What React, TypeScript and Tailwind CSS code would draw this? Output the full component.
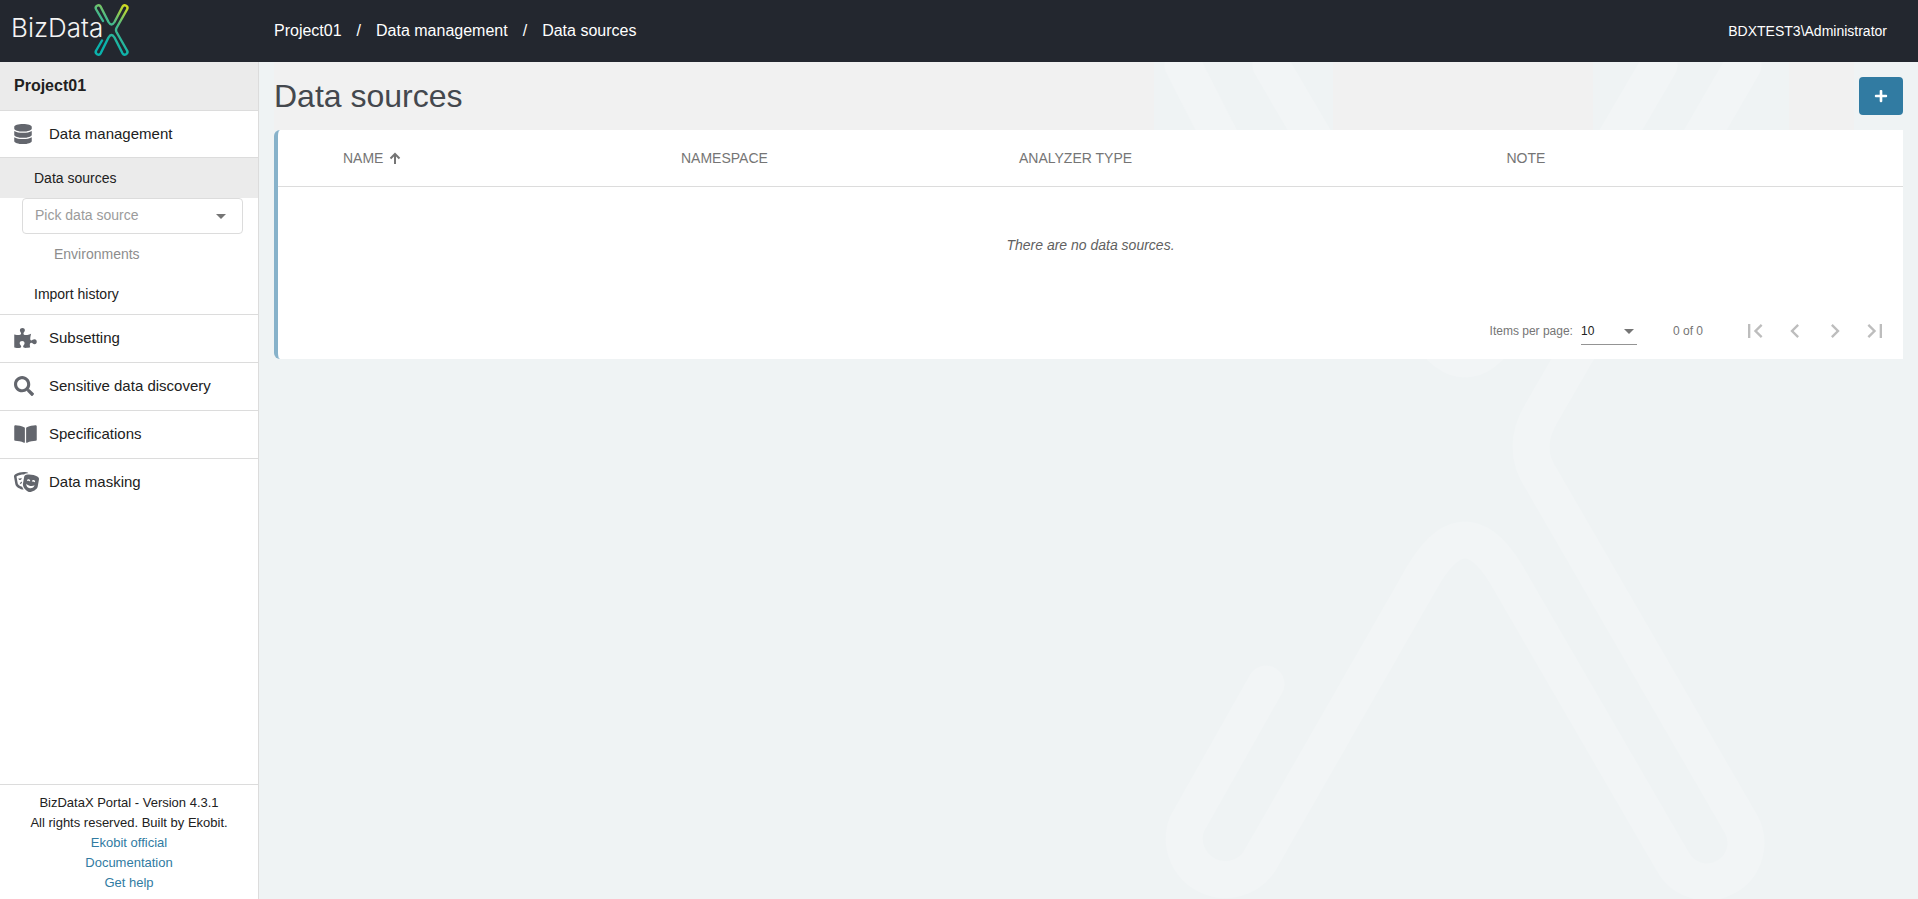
import type { ReactNode } from "react";
import { FaBookOpen, FaDatabase, FaPlus, FaPuzzlePiece, FaSearch, FaTheaterMasks } from "react-icons/fa";
import { MdArrowDropDown, MdChevronLeft, MdChevronRight, MdFirstPage, MdLastPage } from "react-icons/md";

const breadcrumbs = ["Project01", "Data management", "Data sources"];

const footerLinks = ["Ekobit official", "Documentation", "Get help"];

const sections = [
  { label: "Subsetting", icon: <FaPuzzlePiece className="h-5 w-[23px]" /> },
  { label: "Sensitive data discovery", icon: <FaSearch className="size-5" /> },
  { label: "Specifications", icon: <FaBookOpen className="h-5 w-[23px]" /> },
  { label: "Data masking", icon: <FaTheaterMasks className="h-5 w-[25px]" /> },
];

function Logo() {
  return (
    <svg width="130" height="62" viewBox="0 0 130 62" role="img" aria-label="BizDataX">
      <defs>
        <linearGradient id="logo-x" gradientUnits="userSpaceOnUse" x1="127" y1="6" x2="103" y2="42">
          <stop offset="0" stopColor="#d3dc1f" />
          <stop offset="0.5" stopColor="#48b98a" />
          <stop offset="1" stopColor="#0ab2ac" />
        </linearGradient>
      </defs>
      <text x="11" y="37" fill="#f4f4f4" fontFamily="Inter, sans-serif" fontWeight="300" fontSize="26">
        BizData
      </text>
      <g fill="none" stroke="url(#logo-x)" strokeWidth="2.4" strokeLinecap="round" strokeLinejoin="round">
        <path d="M103 21 96.200 9.500a2.600 2.600 0 0 1 4.500-2.800L108.500 22q3 5 6 0L122.500 6.700a2.600 2.600 0 0 1 4.500 2.800L116.500 28q-1 2 0 4L127 50.500a2.600 2.600 0 0 1-4.500 2.800L114.500 37.500q-3-5-6 0L100.700 53.300a2.600 2.600 0 0 1-4.500-2.800L102 40.500" />
      </g>
    </svg>
  );
}

function SortArrow() {
  return (
    <svg className="size-3" viewBox="0 0 12 12" fill="none" stroke="currentColor" strokeWidth="2" aria-hidden="true">
      <path d="M6 12V2M1.500 6.500 6 2l4.500 4.500" />
    </svg>
  );
}

function Watermark() {
  return (
    <svg
      className="pointer-events-none absolute right-0 top-0 h-[837px] w-[800px]"
      viewBox="1118 62 800 837"
      fill="none"
      stroke="#f2f5f6"
      strokeWidth="37"
      strokeLinecap="round"
      strokeLinejoin="round"
      aria-hidden="true"
    >
      <path d="M1743 65 1542 412Q1520 448 1542 480L1741 824A38 38 0 0 1 1673 862L1506 574Q1465 506 1424 574L1259 862A41 41 0 0 1 1187 824L1266 684" />
      <path d="M1659 65 1506 326Q1465 392 1424 326L1271 65" />
      <path d="M1183 65 1230 157" />
    </svg>
  );
}

interface SectionButtonProps {
  icon: ReactNode;
  label: string;
}

function SectionButton({ icon, label }: SectionButtonProps) {
  return (
    <button type="button" className="flex h-[46px] w-full items-center px-3.5 text-left text-[15px]">
      <span className="flex w-[35px] shrink-0 text-[#63666d]">{icon}</span>
      {label}
    </button>
  );
}

function Sidebar() {
  return (
    <aside className="flex w-[259px] shrink-0 flex-col border-r border-[#dcdcdc] bg-white">
      <h2 className="h-[49px] border-b border-[#dcdcdc] bg-[#ebebeb] px-3.5 text-base leading-[47px] font-bold">
        Project01
      </h2>
      <nav>
        <SectionButton icon={<FaDatabase className="h-5 w-[18px]" />} label="Data management" />
        <div className="border-b border-[#dcdcdc]">
          <a
            href="#data-sources"
            className="block h-[41px] border-t border-[#dcdcdc] bg-[#ebebeb] pl-[34px] text-sm leading-10"
          >
            Data sources
          </a>
          <div className="relative mr-[15px] ml-[22px]">
            <select
              aria-label="Pick data source"
              className="h-9 w-full appearance-none rounded border border-[#dcdcdc] bg-white px-3 pb-0.5 text-sm text-[#9b9b9b]"
            >
              <option>Pick data source</option>
            </select>
            <MdArrowDropDown className="pointer-events-none absolute top-1.5 right-2.5 size-6 text-[#757575]" />
          </div>
          <a href="#environments" className="block h-10 pl-[54px] text-sm leading-10 text-[#8d8d8d]">
            Environments
          </a>
          <a href="#import-history" className="block h-10 pl-[34px] text-sm leading-10">
            Import history
          </a>
        </div>
        <ul className="divide-y divide-[#dcdcdc]">
          {sections.map((section) => (
            <li key={section.label} className="pb-px">
              <SectionButton icon={section.icon} label={section.label} />
            </li>
          ))}
        </ul>
      </nav>
      <footer className="mt-auto border-t border-[#dcdcdc] px-2 pt-2 pb-1.5 text-center text-[13px] leading-5">
        <p>BizDataX Portal - Version 4.3.1</p>
        <p>All rights reserved. Built by Ekobit.</p>
        {footerLinks.map((link) => (
          <a key={link} href="#" className="block text-[#317ba2]">
            {link}
          </a>
        ))}
      </footer>
    </aside>
  );
}

function Paginator() {
  return (
    <div className="flex h-14 items-center justify-end pr-2 text-xs text-[#757575]">
      <label htmlFor="page-size">Items per page:</label>
      <div className="relative ml-2 w-14">
        <select
          id="page-size"
          className="h-7 w-full appearance-none border-b border-[#949494] bg-transparent text-[#212121]"
        >
          <option>10</option>
        </select>
        <MdArrowDropDown className="pointer-events-none absolute top-0.5 -right-1 size-6" />
      </div>
      <span className="mr-8 ml-9">0 of 0</span>
      <div className="flex text-[#bdbdbd]">
        <button type="button" aria-label="First page" className="flex size-10 items-center justify-center">
          <MdFirstPage className="size-7" />
        </button>
        <button type="button" aria-label="Previous page" className="flex size-10 items-center justify-center">
          <MdChevronLeft className="size-7" />
        </button>
        <button type="button" aria-label="Next page" className="flex size-10 items-center justify-center">
          <MdChevronRight className="size-7" />
        </button>
        <button type="button" aria-label="Last page" className="flex size-10 items-center justify-center">
          <MdLastPage className="size-7" />
        </button>
      </div>
    </div>
  );
}

function DataSourcesTable() {
  return (
    <section className="relative rounded-l-md border-l-4 border-[#87b2ca] bg-white">
      <table className="w-full table-fixed text-left">
        <thead>
          <tr className="h-14 border-b border-[#dcdcdc] text-sm text-[#757575]">
            <th className="w-[4%]" />
            <th className="w-[20.8%] font-normal">
              <button type="button" className="flex items-center gap-1.5">
                NAME <SortArrow />
              </button>
            </th>
            <th className="w-[20.8%] font-normal">NAMESPACE</th>
            <th className="w-[30%] font-normal">ANALYZER TYPE</th>
            <th className="font-normal">NOTE</th>
          </tr>
        </thead>
        <tbody>
          <tr className="h-[117px] text-center text-sm text-[#616161] italic">
            <td colSpan={5}>There are no data sources.</td>
          </tr>
        </tbody>
      </table>
      <Paginator />
    </section>
  );
}

export default function App() {
  return (
    <div className="flex min-h-screen flex-col bg-[#eff3f4] font-['Liberation_Sans',Arial,sans-serif] text-[#212121]">
      <header className="flex h-[62px] shrink-0 items-center bg-[#23272f] text-white">
        <div className="w-[274px] shrink-0">
          <Logo />
        </div>
        <nav aria-label="Breadcrumb" className="flex text-base">
          {breadcrumbs.map((crumb, index) => (
            <span key={crumb}>
              {index > 0 ? <span className="mx-[15px]">/</span> : null}
              <a href="#">{crumb}</a>
            </span>
          ))}
        </nav>
        <span className="ml-auto pr-[31px] text-sm">BDXTEST3\Administrator</span>
      </header>
      <div className="flex flex-1">
        <Sidebar />
        <main className="relative flex-1 overflow-hidden px-[15px]">
          <Watermark />
          <div className="relative flex h-[68px] items-center justify-between bg-[linear-gradient(90deg,#f1f1f1_54%,transparent_54%,transparent_65%,#f1f1f1_65%,#f1f1f1_81%,transparent_81%,transparent_93%,#f1f1f1_93%,#f1f1f1_97%,transparent_97%)]">
            <h1 className="text-[32px] text-[#44484e]">Data sources</h1>
            <button
              type="button"
              aria-label="Add data source"
              className="flex h-[38px] w-11 items-center justify-center rounded bg-[#317ba2] text-white"
            >
              <FaPlus className="size-3.5" />
            </button>
          </div>
          <DataSourcesTable />
        </main>
      </div>
    </div>
  );
}
